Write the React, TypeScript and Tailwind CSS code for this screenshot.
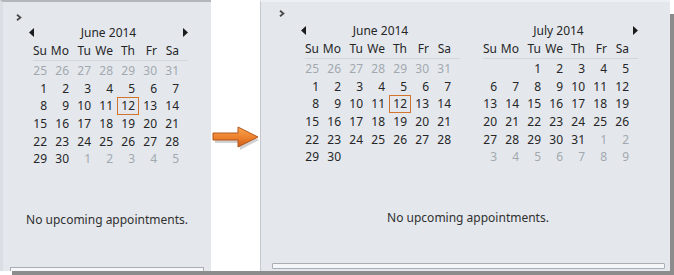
import React from "react";

type Cell = { d: number | null; m?: boolean; t?: boolean };

const mk = (arr: (number | null)[], muted: boolean[] = []): Cell[] =>
  arr.map((d, i) => ({ d, m: muted[i] ?? false, t: false }));

const row = (from: number, to: number, m = false): Cell[] => {
  const r: Cell[] = [];
  for (let i = from; i <= to; i++) r.push({ d: i, m });
  return r;
};

const juneLeft: Cell[][] = [
  row(25, 31, true),
  row(1, 7),
  row(8, 14).map((c) => ({ ...c, t: c.d === 12 })),
  row(15, 21),
  row(22, 28),
  [...row(29, 30), ...row(1, 5, true)],
];

const juneRight: Cell[][] = [
  row(25, 31, true),
  row(1, 7),
  row(8, 14).map((c) => ({ ...c, t: c.d === 12 })),
  row(15, 21),
  row(22, 28),
  [...row(29, 30), ...mk([null, null, null, null, null])],
];

const july: Cell[][] = [
  [...mk([null, null]), ...row(1, 5)],
  row(6, 12),
  row(13, 19),
  row(20, 26),
  [...row(27, 31), ...row(1, 2, true)],
  row(3, 9, true),
];

const heads = ["Su", "Mo", "Tu", "We", "Th", "Fr", "Sa"];

function LeftTri() {
  return (
    <svg width="5" height="9" viewBox="0 0 5 9" className="block">
      <polygon points="5,0 0,4.5 5,9" fill="#1c1c1c" />
    </svg>
  );
}
function RightTri() {
  return (
    <svg width="5" height="9" viewBox="0 0 5 9" className="block">
      <polygon points="0,0 5,4.5 0,9" fill="#1c1c1c" />
    </svg>
  );
}

function Chevron() {
  return (
    <svg width="6" height="7" viewBox="0 0 6 7" className="block">
      <polyline points="1,0.8 4.4,3.5 1,6.2" fill="none" stroke="#4a4a4a" strokeWidth="1.8" />
    </svg>
  );
}

function Month({
  title,
  left,
  right,
  weeks,
}: {
  title: string;
  left?: boolean;
  right?: boolean;
  weeks: Cell[][];
}) {
  return (
    <div className="w-[160px] flex flex-col">
      <div className="h-[19px] flex items-center">
        <div className="w-[5px] flex items-center">{left && <LeftTri />}</div>
        <div className="flex-1 text-center leading-[19px] text-[#262626]">{title}</div>
        <div className="w-[5px] mr-[1px] flex items-center">{right && <RightTri />}</div>
      </div>
      <div className="grid grid-cols-[repeat(7,22px)] h-[18px]">
        {heads.map((h) => (
          <div key={h} className="flex items-center justify-end pr-[4px] text-[#262626]">
            {h}
          </div>
        ))}
      </div>
      <div className="h-px bg-[#d3d7dc] ml-[4px] mr-[1px]" />
      <div className="mt-[1.2px] flex flex-col">
        {weeks.map((w, i) => (
          <div key={i} className="grid grid-cols-[repeat(7,22px)] h-[17.6px]">
            {w.map((c, j) => (
              <div
                key={j}
                className={
                  c.t
                    ? "flex items-center justify-end pr-[3px] border border-[#d2742c] h-[18px] text-[#262626]"
                    : c.m
                    ? "flex items-center justify-end pr-[4px] text-[#a3a8ae]"
                    : "flex items-center justify-end pr-[4px] text-[#262626]"
                }
              >
                {c.d ?? ""}
              </div>
            ))}
          </div>
        ))}
      </div>
    </div>
  );
}

function Arrow() {
  return (
    <svg width="49" height="32" viewBox="0 0 49 32" className="block">
      <defs>
        <linearGradient id="og" x1="0" y1="0" x2="0" y2="1">
          <stop offset="0" stopColor="#f9a552" />
          <stop offset="0.55" stopColor="#ec7f2b" />
          <stop offset="1" stopColor="#c9601c" />
        </linearGradient>
      </defs>
      <path d="M4,14 H29 V8 L48,18 L29,28 V21 H4 Z" fill="#7a7a7a" opacity="0.35" />
      <path
        d="M2,11 H27 V5 L47,15 L27,25 V18 H2 Z"
        fill="url(#og)"
        stroke="#b3561c"
        strokeWidth="1"
        strokeLinejoin="miter"
      />
    </svg>
  );
}

export default function App() {
  return (
    <div className="w-[674px] h-[275px] bg-white flex flex-col font-['Noto_Sans',sans-serif] text-[12px] overflow-hidden">
      <div className="flex h-[271px]">
        {/* Left panel */}
        <div className="w-[211px] h-full bg-[#e4e8ed] border-t-[2px] border-t-[#b3b7bc] border-l-[3px] border-l-[#dadfe5] flex flex-col">
          <div className="pt-[12px] pl-[13px] h-[19px]">
            <Chevron />
          </div>
          <div className="mt-[2px] ml-[26px] flex flex-col">
            <Month title="June 2014" left right weeks={juneLeft} />
            <div className="w-[160px] pr-[4px] mt-[43.7px] flex justify-center leading-[17px] text-[#303030] whitespace-nowrap">
              <span>No upcoming appointments.</span>
            </div>
          </div>
          <div className="flex-1" />
          <div className="ml-[7px] w-[194px] h-[4px] border-t border-l border-r border-[#a8aeb5] bg-[#f4f6f8]" />
        </div>

        {/* Gap with arrow */}
        <div className="w-[49px] h-full bg-white">
          <div className="mt-[122px]">
            <Arrow />
          </div>
        </div>

        {/* Right panel */}
        <div className="w-[410px] h-full bg-[#e4e8ed] border-t-[2px] border-t-[#eef1f4] border-l border-l-[#c3c9cf] flex flex-col">
          <div className="pt-[8px] pl-[18px] h-[17px]">
            <Chevron />
          </div>
          <div className="mt-[2px] ml-[40px] flex flex-col w-[338px]">
            <div className="flex gap-[18px]">
              <Month title="June 2014" left weeks={juneRight} />
              <Month title="July 2014" right weeks={july} />
            </div>
            <div className="pr-[4px] mt-[43.7px] flex justify-center leading-[17px] text-[#303030] whitespace-nowrap">
              <span>No upcoming appointments.</span>
            </div>
          </div>
          <div className="flex-1" />
          <div className="ml-[11px] w-[393px] h-[6px] mb-[2px] border border-[#a8aeb5] bg-[#f4f6f8] rounded-[1px]" />
        </div>

        {/* right shadow */}
        <div className="w-[4px] h-full flex flex-col">
          <div className="h-[14px] bg-white" />
          <div className="flex-1 bg-[#8c8c8c]" />
        </div>
      </div>
      <div className="flex h-[4px]">
        <div className="w-[12px] bg-white" />
        <div className="flex-1 bg-[#8c8c8c]" />
      </div>
    </div>
  );
}
